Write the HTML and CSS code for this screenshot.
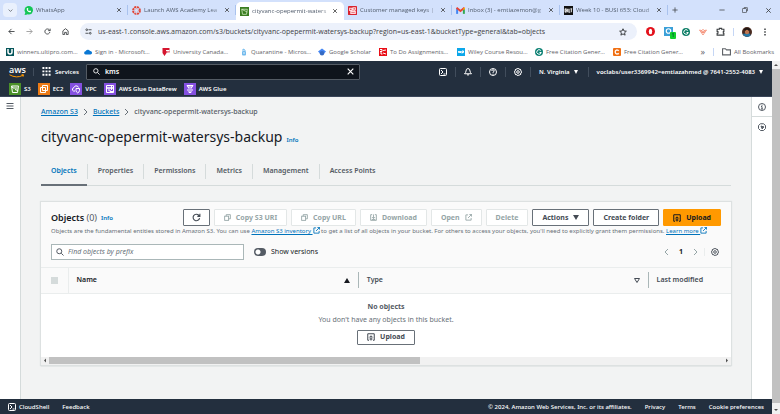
FILE: index.html
```html
<!DOCTYPE html>
<html lang="en">
<head>
<meta charset="utf-8">
<title>cityvanc-opepermit-watersys-backup - S3 bucket</title>
<link rel="stylesheet" href="styles.css">
</head>
<body>
<svg class="sprite" aria-hidden="true">
  <symbol id="x" viewBox="0 0 16 16"><path d="M3 3l10 10M13 3L3 13"/></symbol>
  <symbol id="refresh" viewBox="0 0 16 16"><path d="M13.500 9A5.800 5.800 0 1 1 12 4l2 2M14 1.500V6H9.500"/></symbol>
  <symbol id="search" viewBox="0 0 16 16"><circle cx="6.500" cy="6.500" r="5"/><path d="M10.500 10.500L15 15"/></symbol>
  <symbol id="shell" viewBox="0 0 16 16"><rect x="1" y="1" width="14" height="14" rx="2"/><path d="M4 4l4 4-4 4M9 12h4"/></symbol>
  <symbol id="gear" viewBox="0 0 16 16"><path d="M6.500 1h3l.6 1.800 2-.7 2 2.100-.9 1.900L15 7v2.500l-1.900.8.7 2-2.100 2-1.900-.9L9 15H6.500l-.8-1.900-1.900.7-2-2.100.9-1.900L1 9V6.500l1.900-.7-.7-2 2.100-2 1.600.9z"/><circle cx="8" cy="8" r="2.600"/></symbol>
  <symbol id="ext" viewBox="0 0 16 16"><path d="M7 2H2v12h12V9M10 1h5v5M15 1L7 9"/></symbol>
  <symbol id="copy" viewBox="0 0 16 16"><rect x="1.500" y="5" width="9" height="9.500"/><path d="M5 5V1.500h9.500V11H11"/></symbol>
  <symbol id="up" viewBox="0 0 16 16"><path d="M4 14.500H1.500v-13h13v13H12M8 15V6M4.500 9L8 5.500 11.500 9M5 12h6"/></symbol>
  <symbol id="down" viewBox="0 0 16 16"><path d="M5 1.500H1.500v13h13v-13H11M8 1v9M4.500 7L8 10.500 11.500 7M4 12.500h8"/></symbol>
  <symbol id="chev" viewBox="0 0 10 16"><path d="M2 2l6 6-6 6"/></symbol>
</svg>

<header class="browser">
  <div class="tabstrip">
    <button class="tablist" aria-label="Search tabs"><svg class="i5" viewBox="0 0 16 16"><path d="M2 5l6 6 6-6"/></svg></button>
    <div class="tab"><svg class="fav" viewBox="0 0 16 16"><circle cx="8.500" cy="7.500" r="7.500" fill="#14c656"/><path d="M1 16l1.500-5L6 15z" fill="#14c656"/><path d="M5 4c-1 4 3 8 7 7l.5-2-2-1-1 1C8 8.500 7 7.500 6.800 6.500l1-1L7 3.700z" fill="#fff"/></svg><span>WhatsApp</span><button aria-label="Close"><svg class="i6"><use href="#x"/></svg></button></div>
    <div class="tab"><svg class="fav" viewBox="0 0 16 16"><circle cx="8" cy="8" r="6.300" fill="none" stroke="#e2402f" stroke-width="3" stroke-dasharray="3.700 1.250"/><circle cx="8" cy="8" r="3.500" fill="none" stroke="#e2402f" stroke-width="1.200" stroke-dasharray="1.300 1.450"/></svg><span>Launch AWS Academy Lea</span><button aria-label="Close"><svg class="i6"><use href="#x"/></svg></button></div>
    <div class="tab active"><svg class="fav" viewBox="0 0 16 16"><path fill="#3b7d20" d="M0 0h16v16H0z"/><path d="M3 4h10l-1.500 9h-7zM3 4l10 5" fill="none" stroke="#d9f0c8" stroke-width="1.300"/></svg><span>cityvanc-opepermit-waters</span><button aria-label="Close"><svg class="i6"><use href="#x"/></svg></button></div>
    <div class="tab"><svg class="fav" viewBox="0 0 16 16"><rect width="16" height="16" rx="1.500" fill="#d9232e"/><path d="M3 4h4v4H3zM9 3h4v4H9zM5 10h8v3H5zM7 6h2M5 8v4M11 7v3" fill="none" stroke="#ffd9dc"/></svg><span>Customer managed keys |</span><button aria-label="Close"><svg class="i6"><use href="#x"/></svg></button></div>
    <div class="tab"><svg class="fav" viewBox="0 0 16 16"><path d="M2 14V4" stroke="#4285f4" stroke-width="3.500"/><path d="M14 14V4" stroke="#34a853" stroke-width="3.500"/><path d="M1 3l7 6 7-6" fill="none" stroke="#ea4335" stroke-width="3.500"/><path d="M12.200 5.500L15.800 2v4h-3.600z" fill="#fbbc04"/></svg><span>Inbox (3) - emtiazemon@g</span><button aria-label="Close"><svg class="i6"><use href="#x"/></svg></button></div>
    <div class="tab"><svg class="fav" viewBox="0 0 16 16"><path d="M0 0h16v16H0z" fill="#111"/><path d="M2 5v6M2 5h1.500l1 3-1 3H2M6.500 5v6M9 5v6h2M13 5v6M11.500 5h3" fill="none" stroke="#ddd"/></svg><span>Week 10 - BUSI 653: Cloud</span><button aria-label="Close"><svg class="i6"><use href="#x"/></svg></button></div>
    <button class="newtab" aria-label="New tab"><svg class="i6" viewBox="0 0 16 16"><path d="M8 1v14M1 8h14"/></svg></button>
    <div class="winctl">
      <button aria-label="Minimize"><svg class="i6" viewBox="0 0 16 16"><path d="M1 8h14"/></svg></button>
      <button aria-label="Restore"><svg class="i6" viewBox="0 0 16 16"><rect x="1" y="4" width="11" height="11" rx="2"/><path d="M5 1h7q3 0 3 3v7"/></svg></button>
      <button aria-label="Close window"><svg class="i7"><use href="#x"/></svg></button>
    </div>
  </div>

  <div class="toolbar">
    <button aria-label="Back"><svg class="i7" viewBox="0 0 16 16"><path d="M15 8H2M8 2L2 8l6 6"/></svg></button>
    <button class="dim" aria-label="Forward"><svg class="i7" viewBox="0 0 16 16"><path d="M1 8h13M8 2l6 6-6 6"/></svg></button>
    <button aria-label="Reload"><svg class="i7"><use href="#refresh"/></svg></button>
    <button aria-label="Home"><svg class="i7" viewBox="0 0 16 16"><path d="M2 15V6.500L8 1.500l6 5V15h-4v-5H6v5z"/></svg></button>
    <div class="address">
      <svg class="i7" viewBox="0 0 16 16"><circle cx="4" cy="4" r="2"/><path d="M8 4h7M1 12h7"/><circle cx="12" cy="12" r="2"/></svg>
      <input aria-label="Address" value="us-east-1.console.aws.amazon.com/s3/buckets/cityvanc-opepermit-watersys-backup?region=us-east-1&amp;bucketType=general&amp;tab=objects">
      <button aria-label="Bookmark this page"><svg class="i8" viewBox="0 0 16 16"><path d="M8 1.500l2 4.500 4.700.4-3.600 3.200 1.100 4.700L8 11.800l-4.200 2.500 1.100-4.700L1.300 6.400 6 6z"/></svg></button>
    </div>
    <div class="extensions">
      <svg class="i9" viewBox="0 0 16 16"><circle cx="8" cy="8" r="8" fill="#e3111b" stroke="none"/><ellipse cx="8" cy="8" rx="3" ry="4.800" fill="#fff" stroke="none"/></svg>
      <span class="badged"><svg class="i9" viewBox="0 0 16 16"><path d="M0 0h16v16H0z" fill="#3ba0d8" stroke="none"/><circle cx="8" cy="7" r="4" stroke="#fff"/></svg><b>1</b></span>
      <svg class="i8" viewBox="0 0 16 16"><circle cx="8" cy="8" r="8" fill="#0f7f68" stroke="none"/><path d="M11.500 5A4.500 4.500 0 1 0 12.500 9H9" stroke="#fff"/></svg>
      <svg class="i8" viewBox="0 0 16 16"><path d="M1 4l7 10 7-10-4 1-3-2-3 2zM5 5l3 5 3-5M4 8h8" stroke="#f16b4a" stroke-width="1.300"/></svg>
      <svg class="i9" viewBox="0 0 16 16"><path d="M2 4h4V2.500h4V4h4v4h-1v3h1v3.500H2V11h1.500V8H2z"/></svg>
      <i class="vsep"></i>
      <svg class="i10" viewBox="0 0 16 16"><circle cx="8" cy="8" r="8" fill="#4a2b20" stroke="none"/><path d="M1 11a8 8 0 0 0 13 2l-3-4z" fill="#2679a8" stroke="none"/><circle cx="8" cy="8" r="3.500" fill="#bf7650" stroke="none"/><path d="M4 5q4-5 8 0" stroke="#1d1512" stroke-width="3"/></svg>
      <svg class="i8" viewBox="0 0 16 16"><path d="M8 1v3M8 6.500v3M8 12v3" stroke-width="3"/></svg>
    </div>
  </div>

  <nav class="bookmarks" aria-label="Bookmarks">
    <a href="#"><svg class="i8" viewBox="0 0 16 16"><path d="M0 0h16v16H0z" fill="#07565b" stroke="none"/><path d="M4 2v6q0 4 4 4t4-4V2" stroke="#fff" stroke-width="3"/></svg><span>winners.ultipro.com…</span></a>
    <a href="#"><svg class="i8" viewBox="0 0 16 16"><path d="M3 13a3.300 3.300 0 0 1 0-6.500A5 5 0 0 1 12 6a3.500 3.500 0 0 1 1 7z" fill="#0a78d4" stroke="none"/></svg><span>Sign in - Microsoft…</span></a>
    <a href="#"><svg class="i8" viewBox="0 0 16 16"><path d="M1 0h14v9L9 10l-4 6-4-6z" fill="#d5152e" stroke="none"/><path d="M8 5h7M9 8h5" stroke="#fff"/></svg><span>University Canada…</span></a>
    <a href="#"><svg class="i8" viewBox="0 0 16 16"><rect x="4" y="6" width="8" height="9" rx="2" fill="#73bbed" stroke="none"/><path d="M6 6V2l4 2v2" stroke="#73bbed"/><circle cx="8" cy="10" r="1.500" fill="#fff" stroke="none"/></svg><span>Quarantine - Micros…</span></a>
    <a class="short" href="#"><svg class="i8" viewBox="0 0 16 16"><path d="M0 7l8-6 8 6-3 3H3z" fill="#4285f4" stroke="none"/><circle cx="8" cy="10.500" r="4.500" fill="#356ac3" stroke="none"/></svg><span>Google Scholar</span></a>
    <a href="#"><svg class="i8" viewBox="0 0 16 16"><path d="M0 0h16v16H0z" fill="#e90d16" stroke="none"/><path d="M2 3h4v4H2M4 7v5h3M8 5l6-1M8 10l6 2" stroke="#fff"/></svg><span>To Do Assignments…</span></a>
    <a href="#"><svg class="i8" viewBox="0 0 16 16"><path d="M0 0h16v16H0z" fill="#0ca7ea" stroke="none"/><path d="M3 6l1 4 2-4 1 4 1-4M10 11V6h3v3h-3" stroke="#fff"/></svg><span>Wiley Course Resou…</span></a>
    <a href="#"><svg class="i8" viewBox="0 0 16 16"><circle cx="8" cy="8" r="8" fill="#0f8275" stroke="none"/><path d="M11.500 5A4.500 4.500 0 1 0 12.500 9H9" stroke="#fff"/></svg><span>Free Citation Gener…</span></a>
    <a href="#"><svg class="i8" viewBox="0 0 16 16"><rect width="16" height="16" rx="2" fill="#f06f12" stroke="none"/><path d="M11.500 5.500a4 4 0 1 0 0 5" stroke="#fff" stroke-width="2.500"/></svg><span>Free Citation Gener…</span></a>
    <button class="more" aria-label="More bookmarks">»</button>
    <i class="vsep"></i>
    <a class="all" href="#"><svg class="i9" viewBox="0 0 16 16"><path d="M1 3h5l2 2h7v9H1z"/></svg><span>All Bookmarks</span></a>
  </nav>
</header>

<div class="page">
  <div class="console">
    <header class="awsnav">
      <div class="navrow">
        <a class="logo" href="#" aria-label="AWS"><b>aws</b><svg viewBox="0 0 32 7"><path d="M1 1q14 8 27 1M25 1l4 0-1 4" fill="none" stroke="#f90" stroke-width="2"/></svg></a>
        <i class="vsep"></i>
        <button class="services"><svg class="i9" viewBox="0 0 16 16"><path d="M2.500 0v16M8 0v16M13.500 0v16" stroke-width="3.500" stroke-dasharray="3.500 2.500"/></svg>Services</button>
        <label class="navsearch"><svg class="i7"><use href="#search"/></svg><input aria-label="Search services" value="kms"><button aria-label="Clear"><svg class="i9"><use href="#x"/></svg></button></label>
        <div class="navicons">
          <button aria-label="CloudShell"><svg class="i8"><use href="#shell"/></svg></button>
          <button aria-label="Notifications"><svg class="i8" viewBox="0 0 16 16"><path d="M8 1q4 .5 4 5 0 3 3 5.500H1Q4 9 4 6q0-4.500 4-5zM6 13q2 3 4 0"/></svg></button>
          <button aria-label="Help"><svg class="i8" viewBox="0 0 16 16"><circle cx="8" cy="8" r="7"/><path d="M5.500 6q0-2.500 2.500-2.500T10.500 6Q10.500 7 8 8.500v1.500M8 11.500v2"/></svg></button>
          <button aria-label="Settings"><svg class="i8"><use href="#gear"/></svg></button>
        </div>
        <button class="region">N. Virginia <i class="tri"></i></button>
        <button class="account">voclabs/user3369942=emtiazahmed @ 7641-2552-4083 <i class="tri"></i></button>
      </div>
      <nav class="favs" aria-label="Favorites">
        <a href="#"><svg class="svc green" viewBox="0 0 24 24"><path d="M5 6h14l-2 13H7zM5 6l3 4h9M12 13l6 2"/></svg>S3</a>
        <a href="#"><svg class="svc orange" viewBox="0 0 24 24"><path d="M9 5h10v10H9zM5 9h10v10H5z"/></svg>EC2</a>
        <a href="#"><svg class="svc violet" viewBox="0 0 24 24"><path d="M10 16H7q-3-1-2-4 1-3 3-3 2-5 6-3 3 1 3 3M12 11h7v4q-1 4-3.500 5Q12 18 12 15z"/></svg>VPC</a>
        <a href="#"><svg class="svc violet" viewBox="0 0 24 24"><path d="M5 5h14v5H5zM5 10h14v9H5zM8 14h4v3h7M15 5v9"/></svg>AWS Glue DataBrew</a>
        <a href="#"><svg class="svc violet" viewBox="0 0 24 24"><path d="M6 5h12l-4 6v8h-4v-8zM8 8h8M16 14h2M6 14h2"/></svg>AWS Glue</a>
      </nav>
    </header>

    <div class="body">
      <aside class="left"><button aria-label="Open navigation"><svg class="i8" viewBox="0 0 16 16"><path d="M1 3h14M1 8h14M1 13h14"/></svg></button></aside>
      <main>
        <nav class="crumbs" aria-label="Breadcrumb"><a href="#">Amazon S3</a><svg class="chev"><use href="#chev"/></svg><a href="#">Buckets</a><svg class="chev"><use href="#chev"/></svg><span>cityvanc-opepermit-watersys-backup</span></nav>
        <div class="title"><h1>cityvanc-opepermit-watersys-backup</h1><a class="info" href="#">Info</a></div>
        <div class="tabs" role="tablist">
          <button role="tab" aria-selected="true">Objects</button><button role="tab">Properties</button><button role="tab">Permissions</button><button role="tab">Metrics</button><button role="tab">Management</button><button role="tab">Access Points</button>
        </div>

        <section class="card">
          <div class="cardhead">
            <div class="headrow">
              <h2>Objects <span>(0)</span></h2><a class="info" href="#">Info</a>
              <div class="actions">
                <button class="btn icon" aria-label="Refresh"><svg class="i9"><use href="#refresh"/></svg></button>
                <button class="btn" disabled><svg class="i7"><use href="#copy"/></svg>Copy S3 URI</button>
                <button class="btn" disabled><svg class="i7"><use href="#copy"/></svg>Copy URL</button>
                <button class="btn" disabled><svg class="i7"><use href="#down"/></svg>Download</button>
                <button class="btn" disabled>Open<svg class="i7"><use href="#ext"/></svg></button>
                <button class="btn" disabled>Delete</button>
                <button class="btn">Actions<i class="tri"></i></button>
                <button class="btn">Create folder</button>
                <button class="btn primary"><svg class="i8"><use href="#up"/></svg>Upload</button>
              </div>
            </div>
            <p class="desc">Objects are the fundamental entities stored in Amazon S3. You can use <a href="#">Amazon S3 inventory <svg class="i7"><use href="#ext"/></svg></a> to get a list of all objects in your bucket. For others to access your objects, you'll need to explicitly grant them permissions. <a href="#">Learn more <svg class="i7"><use href="#ext"/></svg></a></p>
            <div class="filters">
              <label class="find"><svg class="i8"><use href="#search"/></svg><input aria-label="Find objects" placeholder="Find objects by prefix"></label>
              <label class="toggle"><input type="checkbox" role="switch">Show versions</label>
              <div class="pager"><button aria-label="Previous page"><svg class="chev flip"><use href="#chev"/></svg></button><b>1</b><button aria-label="Next page"><svg class="chev"><use href="#chev"/></svg></button><i class="vsep"></i><button class="prefs" aria-label="Preferences"><svg class="i8"><use href="#gear"/></svg></button></div>
            </div>
          </div>
          <table>
            <thead><tr>
              <th class="cb"><input type="checkbox" disabled aria-label="Select all"></th>
              <th class="wide"><div><span>Name</span><i class="tri upward"></i></div></th>
              <th class="wide"><div class="ruled"><span>Type</span><svg class="hollow" viewBox="0 0 12 10"><path d="M1 1h10L6 9z"/></svg></div></th>
              <th><div class="ruled"><span>Last modified</span></div></th>
            </tr></thead>
            <tbody><tr><td colspan="4"><b>No objects</b><p>You don't have any objects in this bucket.</p><button class="btn"><svg class="i8"><use href="#up"/></svg>Upload</button></td></tr></tbody>
          </table>
          <div class="hscroll"><i class="arrow lt"></i><div class="track"><div class="thumb"></div></div><i class="arrow rt"></i></div>
        </section>
      </main>
      <aside class="right">
        <button aria-label="Info panel"><svg class="i8" viewBox="0 0 16 16"><circle cx="8" cy="8" r="7"/><path d="M8 3.500v2M6 7h2v5M6 12h4"/></svg></button>
        <button aria-label="Tutorials"><svg class="i8" viewBox="0 0 16 16"><path d="M5 1.500h6L15 5v6l-4 4H5l-4-4V5z"/><path d="M6 6l6 2-2.500 1.500L8.500 12z" fill="currentColor"/></svg></button>
      </aside>
    </div>

    <footer><button class="shell"><svg class="i8"><use href="#shell"/></svg>CloudShell</button><a href="#">Feedback</a><span class="copy">© 2024, Amazon Web Services, Inc. or its affiliates.</span><a href="#">Privacy</a><a href="#">Terms</a><a href="#">Cookie preferences</a></footer>
  </div>
  <div class="vscroll"><i class="arrow top"></i><div class="bar"></div><i class="arrow bot"></i></div>
</div>
</body>
</html>
```

FILE: styles.css
```css
* { box-sizing: border-box; margin: 0; }
body { min-height: 100vh; display: flex; flex-direction: column; font: 7px/10px "Noto Sans", sans-serif; color: #16191f; background: #fff; }
button, input { font: inherit; color: inherit; background: none; border: 0; padding: 0; }
button { display: inline-flex; align-items: center; justify-content: center; white-space: nowrap; }
input { min-width: 0; outline: 0; }
a { color: inherit; text-decoration: none; }
svg { fill: none; stroke: currentColor; stroke-width: 2; flex: none; }
.sprite { position: absolute; width: 0; height: 0; }
.i5 { width: 5px; height: 5px; }
.i6 { width: 6px; height: 6px; }
.i7 { width: 7px; height: 7px; }
.i8 { width: 8px; height: 8px; }
.i9 { width: 9px; height: 9px; }
.i10 { width: 10px; height: 10px; }
.tri { width: 0; height: 0; border: 3px solid transparent; border-top: 5px solid currentColor; border-bottom: 0; }
.upward { border-top: 0; border-bottom: 5px solid currentColor; }
.chev { width: 5px; height: 8px; }
.flip { transform: rotate(180deg); }
.vsep { width: 1px; height: 8px; background: #c5d6f5; }

.browser { font-family: "Open Sans", sans-serif; font-size: 6px; color: #3d4043; }
.tabstrip { display: flex; align-items: center; height: 20px; background: #d3e1fc; }
.tablist { width: 14px; height: 14px; margin: 0 3px; border-radius: 4px; background: #e9f0fd; }
.tab { flex: 0 1 108px; min-width: 0; height: 10px; display: flex; align-items: center; gap: 3px; padding: 0 5px 0 4px; border-right: 1px solid #a9c2ee; color: #4f5a6a; }
.tab span { flex: 1; white-space: nowrap; mask-image: linear-gradient(to right, #000 85%, #0005); }
.tab button { color: #333; }
.tab.active { align-self: flex-end; height: 18px; background: #fff; border-color: #fff; border-radius: 5px 5px 0 0; }
.fav { width: 9px; height: 9px; stroke: none; }
.newtab { margin-left: 4px; }
.winctl { margin-left: auto; display: flex; gap: 17px; padding-right: 8px; }

.toolbar { display: flex; align-items: center; gap: 11px; height: 23px; padding: 0 8px; }
.toolbar .dim { color: #999; }
.address { flex: 1; display: flex; align-items: center; gap: 6px; height: 17px; margin-right: -2px; padding: 0 10px 0 5px; border-radius: 9px; background: #ecf1fb; }
.address input { flex: 1; font-size: 7px; }
.extensions { display: flex; align-items: center; gap: 9px; margin-right: 3px; }
.extensions .vsep { margin: 0 -1px; }
.badged { position: relative; display: flex; }
.badged b { position: absolute; right: -3px; bottom: -3px; width: 6px; height: 7px; border-radius: 1px; background: #12cf2c; color: #063; font-size: 5px; line-height: 7px; text-align: center; }

.bookmarks { display: flex; align-items: center; height: 17px; margin-bottom: 1px; padding: 0 6px; color: #5f6368; }
.bookmarks a { flex: 0 1 78px; min-width: 0; display: flex; align-items: center; gap: 3px; white-space: nowrap; }
.bookmarks .short { flex-basis: 61px; }
.bookmarks .more { margin-left: auto; padding-right: 8px; font-size: 9px; }
.bookmarks .all { flex: none; margin-left: 8px; }

.page { flex: 1; display: flex; }
.console { flex: 1; min-width: 0; display: flex; flex-direction: column; }
.awsnav { background: #232f3e; color: #fff; font-size: 6px; font-weight: 600; border-bottom: 1px solid #3b4659; }
.navrow { display: flex; align-items: center; height: 21px; }
.logo { width: 16px; margin: 0 8px 0 9px; display: flex; flex-direction: column; }
.logo b { font: 600 9px/8px "Open Sans", sans-serif; }
.logo svg { width: 16px; height: 4px; }
.awsnav .vsep { background: #414d5c; }
.services { gap: 4px; margin: 0 7px 0 8px; }
.navsearch { flex: 0 1 274px; display: flex; align-items: center; gap: 5px; height: 16px; padding: 0 4px 0 6px; background: #0f141c; border: 1px solid #545b64; border-radius: 1px; font-size: 7px; }
.navsearch input { flex: 1; }
.navicons { display: flex; margin-left: auto; }
.navicons button { width: 25px; height: 10px; border-right: 1px solid #414d5c; }
.region { height: 10px; padding: 0 10px 0 8px; gap: 4px; border-right: 1px solid #414d5c; }
.account { padding: 0 9px 0 8px; gap: 4px; }
.awsnav .tri { border-width: 4px 2px 0; }
.favs { display: flex; gap: 7px; height: 14px; padding-left: 9px; align-items: center; }
.favs a { display: flex; align-items: center; gap: 3px; }
.svc { width: 12px; height: 12px; stroke: #fff; }
.green { background: #4b9129; }
.orange { background: #ed7b16; }
.violet { background: #8450e0; }

.body { flex: 1; display: flex; }
.left { width: 21px; border-right: 1px solid #d5dbdb; text-align: center; padding-top: 5px; color: #545b64; }
.right { width: 21px; border-left: 1px solid #d5dbdb; color: #545b64; }
.right button { width: 100%; height: 20px; }
.right button:first-child { border-bottom: 1px solid #d5dbdb; }
main { flex: 1; min-width: 0; background: #f2f3f3; padding: 10px 20px 0; }
.crumbs { display: flex; align-items: center; gap: 5px; color: #545b64; font-weight: 500; }
.crumbs a, .desc a { color: #0073bb; text-decoration: underline; }
.crumbs svg { color: #687078; }
.title { display: flex; align-items: baseline; gap: 4px; margin-top: 10px; }
h1 { font-size: 14px; line-height: 20px; font-weight: 400; }
.info { color: #0073bb; font-size: 6px; font-weight: 600; }
.tabs { display: flex; height: 29px; margin-top: 10px; align-items: center; border-bottom: 1px solid #d5dbdb; }
.tabs button { height: 15px; padding: 0 10px; font-weight: 600; color: #545b64; border-right: 1px solid #d5dbdb; }
.tabs button:last-child { border: 0; }
.tabs [aria-selected] { position: relative; color: #0073bb; }
.tabs [aria-selected]::after { content: ""; position: absolute; left: 0; right: 0; bottom: -7px; height: 2px; background: #687078; }

.card { margin-top: 16px; background: #fff; box-shadow: 0 0 1px 1px #dde1e1, 0 1px 1px #aab7b8; }
.cardhead { background: #fafafa; padding: 7px 10px 7px; border-bottom: 1px solid #eaeded; }
.headrow { display: flex; align-items: center; height: 17px; gap: 4px; }
h2 { font-size: 9px; line-height: 12px; font-weight: 600; }
h2 span { font-weight: 400; color: #545b64; }
.actions { margin-left: auto; display: flex; gap: 4px; }
.btn { height: 17px; padding: 0 9px; gap: 5px; border: 1px solid #687078; border-radius: 1px; font-weight: 700; color: #444b54; background: #fff; }
.btn.icon { padding: 0 8px; }
.btn:disabled { color: #95a5a6; border-color: #e3e7e7; }
.btn.primary { background: #f90; border-color: #f90; color: #16191f; }
.desc { font-size: 6px; line-height: 10px; color: #687078; white-space: nowrap; }
.desc svg { vertical-align: -1px; }
.filters { display: flex; align-items: center; margin-top: 8px; }
.find { flex: 0 1 193px; display: flex; align-items: center; gap: 4px; height: 16px; padding: 0 4px; border: 1px solid #aab7b8; background: #fff; color: #545b64; }
.find input { flex: 1; }
.find input::placeholder { color: #687078; font-style: italic; opacity: 1; }
.toggle { display: flex; align-items: center; gap: 5px; margin-left: 10px; }
.toggle input { appearance: none; width: 12px; height: 8px; border-radius: 4px; background: radial-gradient(circle at 4px 4px, #fff 2px, #545b64 3px); }
.pager { display: flex; align-items: center; gap: 10px; margin-left: auto; color: #95a5a6; }
.pager b { color: #16191f; }
.pager .prefs { color: #545b64; margin-right: 2px; }
.pager .vsep { background: #eaeded; margin: 0 -4px; }

table { width: 100%; border-collapse: collapse; table-layout: fixed; }
thead tr { height: 25px; background: #fafafa; border-bottom: 1px solid #eaeded; }
th { padding: 0; text-align: left; color: #444b54; font-weight: 600; }
th:nth-child(2) { color: #16191f; }
.cb { width: 27px; padding-left: 10px; border-right: 1px solid #eaeded; }
.cb input { display: block; appearance: none; width: 7px; height: 7px; background: #d5dbdb; }
.wide { width: 42%; }
th div { display: flex; align-items: center; justify-content: space-between; height: 16px; padding: 0 8px; }
.ruled { border-left: 1px solid #aab7b8; }
.hollow { width: 6px; height: 5px; }
td { padding: 8px 0 12px; text-align: center; color: #545b64; }
td p { margin: 3px 0 5px; color: #687078; }
td .btn { height: 15px; vertical-align: top; }
.hscroll { display: flex; align-items: center; height: 8px; background: #f1f1f1; }
.track { flex: 1; }
.thumb { width: 55%; height: 7px; background: #c1c1c1; }
.arrow { width: 8px; height: 8px; background: #505050; clip-path: polygon(3px 4px, 5px 2px, 5px 6px); }
.arrow.rt { clip-path: polygon(5px 4px, 3px 2px, 3px 6px); }
.arrow.top { clip-path: polygon(2px 5px, 6px 5px, 4px 3px); }
.arrow.bot { clip-path: polygon(2px 3px, 6px 3px, 4px 5px); }
.vscroll { width: 8px; background: #f1f1f1; display: flex; flex-direction: column; }
.bar { flex: 1; background: #c1c1c1; margin-bottom: 3px; }

footer { display: flex; align-items: center; height: 15px; padding: 0 8px; gap: 13px; background: #232f3e; color: #fff; font-size: 6px; font-weight: 500; }
.shell { gap: 3px; }
.copy { margin-left: auto; }
```
